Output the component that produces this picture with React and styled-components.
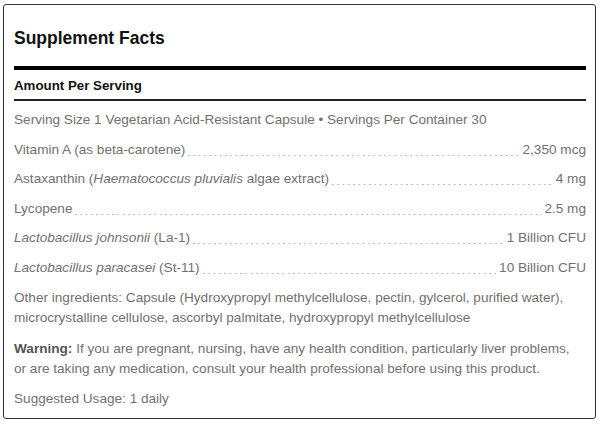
import React from "react";
import styled, { createGlobalStyle } from "styled-components";

const Global = createGlobalStyle`
  html, body { margin: 0; padding: 0; background: #fff; }
  body { font-family: "Liberation Sans", Arial, sans-serif; }
`;

const Page = styled.div`
  width: 600px;
  height: 424px;
  padding: 4px 4px 0 3px;
  box-sizing: border-box;
`;

const Box = styled.div`
  border: 1px solid #333;
  border-radius: 3px;
  height: 415px;
  box-sizing: border-box;
  padding: 0 9px 0 10px;
`;

const Title = styled.h1`
  margin: 0;
  padding-top: 22px;
  height: 61px;
  box-sizing: border-box;
  font-size: 17.5px;
  font-weight: bold;
  color: #111;
  line-height: 22px;
`;

const ThickRule = styled.div`
  height: 4px;
  background: #000;
`;

const Header = styled.div`
  font-size: 13.3px;
  font-weight: bold;
  color: #111;
  height: 29px;
  display: flex;
  align-items: center;
  padding-top: 1px;
  box-sizing: border-box;
`;

const ThinRule = styled.div`
  height: 2px;
  background: #222;
`;

const Text = styled.p`
  margin: 0;
  font-size: 13.6px;
  color: #717171;
  line-height: 20px;
  white-space: nowrap;
  padding-top: ${(p) => p.$top || 0}px;
`;

const Row = styled.div`
  display: flex;
  align-items: baseline;
  font-size: 13.6px;
  color: #717171;
  line-height: 20px;
  padding-top: 9.5px;
`;

const Leader = styled.span`
  flex: 1;
  align-self: stretch;
  margin: 0 2px;
  background-image: linear-gradient(to right, #b8b8b8 0 1.8px, transparent 1.8px);
  background-size: 5.3px 1px;
  background-repeat: repeat-x;
  background-position: 1px 15px;
`;

const Bold = styled.b`
  color: #555;
`;

const rows = [
  [<>Vitamin A (as beta-carotene)</>, "2,350 mcg"],
  [<>Astaxanthin (<i>Haematococcus pluvialis</i> algae extract)</>, "4 mg"],
  [<>Lycopene</>, "2.5 mg"],
  [<><i>Lactobacillus johnsonii</i> (La-1)</>, "1 Billion CFU"],
  [<><i>Lactobacillus paracasei</i> (St-11)</>, "10 Billion CFU"],
];

export default function App() {
  return (
    <>
      <Global />
      <Page>
        <Box>
          <Title>Supplement Facts</Title>
          <ThickRule />
          <Header>Amount Per Serving</Header>
          <ThinRule />
          <Text $top={9}>
            Serving Size 1 Vegetarian Acid-Resistant Capsule • Servings Per Container 30
          </Text>
          {rows.map(([name, amt], i) => (
            <Row key={i}>
              <span>{name}</span>
              <Leader />
              <span>{amt}</span>
            </Row>
          ))}
          <Text $top={10}>
            Other ingredients: Capsule (Hydroxypropyl methylcellulose, pectin, gylcerol, purified water),
            <br />
            microcrystalline cellulose, ascorbyl palmitate, hydroxypropyl methylcellulose
          </Text>
          <Text $top={11}>
            <Bold>Warning:</Bold> If you are pregnant, nursing, have any health condition, particularly liver problems,
            <br />
            or are taking any medication, consult your health professional before using this product.
          </Text>
          <Text $top={10}>Suggested Usage: 1 daily</Text>
        </Box>
      </Page>
    </>
  );
}
